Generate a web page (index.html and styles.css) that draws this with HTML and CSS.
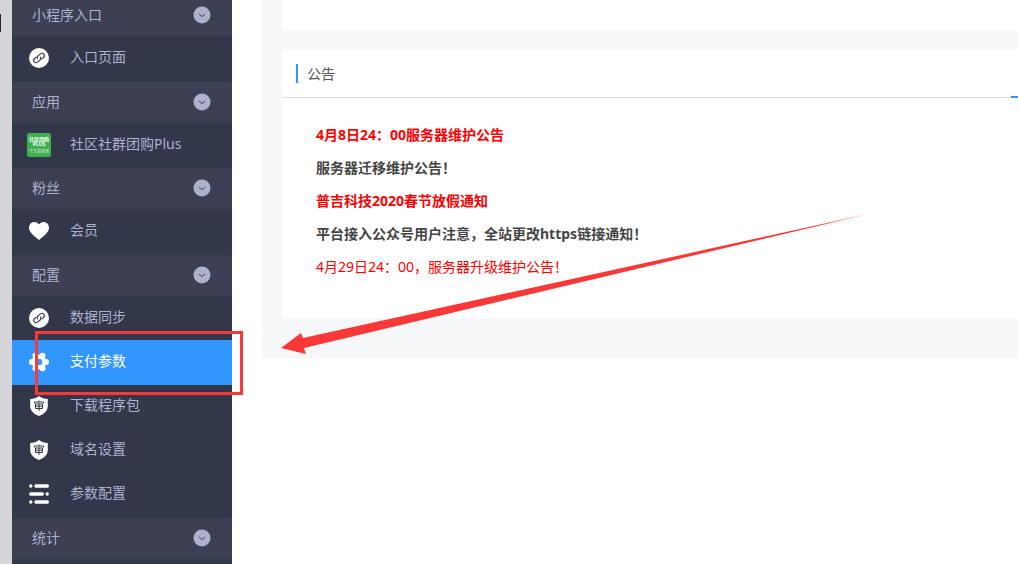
FILE: index.html
```html
<!DOCTYPE html>
<html lang="zh-CN">
<head>
    <meta charset="UTF-8">
    <title>公告</title>
    <link rel="stylesheet" href="styles.css">
</head>
<body>
    <!-- 公用图标 -->
    <svg class="sprite" aria-hidden="true">
        <symbol id="icon-down" viewBox="0 0 18 18">
            <circle cx="9" cy="9" r="8.5" fill="#acb1cd"/>
            <path d="M6 8l3 2.6L12 8" fill="none" stroke="#3c4052" stroke-width="1"/>
        </symbol>
        <symbol id="icon-link" viewBox="0 0 20 20">
            <circle cx="10" cy="10" r="10" fill="#fff"/>
            <g fill="none" stroke="#32374a" stroke-width="1.1" stroke-linecap="round">
                <path d="M8.600 10.900c-.8-1.100-.5-2.200.3-2.900l2.200-1.900c1.200-1 2.800-1 3.700 0 .9 1.100.7 2.400-.4 3.400l-1.500 1.300"/>
                <path d="M11.400 9.100c.8 1.100.5 2.200-.3 2.900l-2.200 1.900c-1.200 1-2.800 1-3.700 0-.9-1.100-.7-2.400.4-3.400l1.500-1.300"/>
            </g>
        </symbol>
        <symbol id="icon-heart" viewBox="0 0 20 20">
            <path d="M10 19C7.500 16.600 0 12 0 6.700 0 3.400 2.400 1 5.300 1 7.300 1 9 2 10 3.400 11 2 12.700 1 14.700 1 17.600 1 20 3.400 20 6.700 20 12 12.500 16.600 10 19z" fill="#fff"/>
        </symbol>
        <symbol id="icon-gear" viewBox="0 0 20 20">
            <g fill="#fff">
                <circle cx="10" cy="10" r="7.300"/>
                <circle cx="3" cy="10" r="3"/>
                <circle cx="17" cy="10" r="3"/>
                <circle cx="6.500" cy="3.800" r="3"/>
                <circle cx="13.500" cy="3.800" r="3"/>
                <circle cx="6.500" cy="16.200" r="3"/>
                <circle cx="13.500" cy="16.200" r="3"/>
            </g>
            <circle cx="10" cy="10" r="3.200" fill="#3296ff"/>
        </symbol>
        <symbol id="icon-shield" viewBox="0 0 20 20">
            <path d="M10 0c2.500 2 5.500 2.800 8.800 3v7c0 5-4.300 8.300-8.800 10-4.500-1.700-8.800-5-8.800-10V3C4.500 2.800 7.500 2 10 0z" fill="#fff"/>
            <path d="M10 4.500V6M5.500 7.500V6h9v1.500M6.500 8h7v4.500h-7zM6.500 10.200h7M10 7.500V15" fill="none" stroke="#32374a" stroke-width="1"/>
        </symbol>
        <symbol id="icon-list" viewBox="0 0 20 20">
            <g stroke="#fff" stroke-width="3.400" stroke-linecap="round">
                <path d="M1.800 2h0M7 2H18.300M1.800 10h11.500M18.200 10h0M1.800 18h0M7 18H18.300"/>
            </g>
        </symbol>
    </svg>

    <div class="layout">
        <div class="rail"><span class="rail-mark"></span></div>

        <nav class="sidebar">
            <button class="group-title" type="button">小程序入口 <svg><use href="#icon-down"/></svg></button>
            <ul class="group">
                <li><a href="#"><span class="icon"><svg><use href="#icon-link"/></svg></span><span class="label">入口页面</span></a></li>
            </ul>

            <button class="group-title" type="button">应用 <svg><use href="#icon-down"/></svg></button>
            <ul class="group">
                <li class="app"><a href="#">
                    <span class="icon">
                        <svg class="app-logo" viewBox="0 0 24 24">
                            <rect width="24" height="24" rx="2.500" fill="#3fb050"/>
                            <g fill="#fff" text-anchor="middle" font-weight="bold">
                                <text x="12" y="8" font-size="5">社区团购</text>
                                <text x="12" y="13" font-size="5">PLUS</text>
                                <text x="12" y="20" font-size="4" opacity=".5">千万店铺用</text>
                            </g>
                        </svg>
                    </span>
                    <span class="label">社区社群团购Plus</span></a></li>
            </ul>

            <button class="group-title" type="button">粉丝 <svg><use href="#icon-down"/></svg></button>
            <ul class="group">
                <li><a href="#"><span class="icon"><svg><use href="#icon-heart"/></svg></span><span class="label">会员</span></a></li>
            </ul>

            <button class="group-title" type="button">配置 <svg><use href="#icon-down"/></svg></button>
            <ul class="group">
                <li><a href="#"><span class="icon"><svg><use href="#icon-link"/></svg></span><span class="label">数据同步</span></a></li>
                <li><a href="#" class="active"><span class="icon"><svg><use href="#icon-gear"/></svg></span><span class="label">支付参数</span></a></li>
                <li><a href="#"><span class="icon"><svg><use href="#icon-shield"/></svg></span><span class="label">下载程序包</span></a></li>
                <li><a href="#"><span class="icon"><svg><use href="#icon-shield"/></svg></span><span class="label">域名设置</span></a></li>
                <li><a href="#"><span class="icon"><svg><use href="#icon-list"/></svg></span><span class="label">参数配置</span></a></li>
            </ul>

            <button class="group-title" type="button">统计 <svg><use href="#icon-down"/></svg></button>
        </nav>

        <main class="content">
            <section class="card card-top"></section>

            <section class="card">
                <header class="card-header">
                    <h2>公告</h2>
                </header>
                <ul class="notices">
                    <li><a href="#" class="red bold">4月8日24：00服务器维护公告</a></li>
                    <li><a href="#" class="bold">服务器迁移维护公告！</a></li>
                    <li><a href="#" class="red bold">普吉科技2020春节放假通知</a></li>
                    <li><a href="#" class="bold">平台接入公众号用户注意，全站更改https链接通知！</a></li>
                    <li><a href="#" class="red">4月29日24：00，服务器升级维护公告！</a></li>
                </ul>
            </section>
        </main>
    </div>

    <!-- 操作指引 -->
    <div class="mark-box"></div>
    <svg class="mark-arrow" viewBox="0 0 588 142">
        <path d="M0 136L20 121L22 126L587 2L23 136L25 142z" fill="#fb3838"/>
    </svg>
</body>
</html>
```

FILE: styles.css
```css
body {
    font-family: "Noto Sans", "Noto Sans CJK SC", sans-serif;
    font-size: 14px;
    line-height: 20px;
    color: #444;
    background-color: #fff;
    margin: 0;
    overflow: hidden;
}

ul {
    list-style: none;
    margin: 0;
    padding: 0;
}

a {
    color: inherit;
    text-decoration: none;
}

.sprite {
    position: absolute;
    width: 0;
    height: 0;
}

.layout {
    display: flex;
    align-items: flex-start;
    height: 100vh;
    overflow: hidden;
}

/* 左侧窄条 */
.rail {
    flex: none;
    width: 12px;
    height: 100%;
    background-color: #d5d4d9;
}

.rail-mark {
    display: block;
    width: 1px;
    height: 18px;
    margin-top: 14px;
    background-color: #222;
}

/* 菜单 */
.sidebar {
    flex: none;
    width: 220px;
    height: 100%;
    background-color: #32374a;
    color: #acb1cd;
    overflow: hidden;
}

.group-title {
    display: flex;
    justify-content: space-between;
    align-items: center;
    width: 100%;
    height: 41px;
    padding: 0 21px 2px 20px;
    border: none;
    border-radius: 3px 3px 0 0;
    background-color: #3c4052;
    color: inherit;
    font: inherit;
    cursor: pointer;
}

.group-title:first-child {
    margin-top: -5px;
}

.group-title svg {
    width: 18px;
    height: 18px;
}

.group {
    padding-bottom: 2px;
}

.group a {
    display: flex;
    align-items: center;
    gap: 19px;
    height: 44px;
    padding: 0 15px;
}

.group .app a {
    height: 43px;
}

.group a.active {
    background-color: #3296ff;
    box-shadow: 0 1px 0 #3296ff;
    color: #fff;
}

.label {
    padding-bottom: 2px;
}

.icon {
    display: flex;
    justify-content: center;
    width: 24px;
}

.icon svg {
    width: 20px;
    height: 20px;
}

.icon .app-logo {
    width: 24px;
    height: 24px;
}

/* 内容区 */
.content {
    flex: 1;
    min-width: 0;
    margin-left: 30px;
    padding: 0 0 40px 20px;
    background-color: #f6f7f9;
}

.card {
    background-color: #fff;
}

.card-top {
    height: 30px;
    margin-bottom: 20px;
}

.card-header {
    position: relative;
    padding: 14px;
    border-bottom: 1px solid #dcdcdc;
}

.card-header::after {
    content: "";
    position: absolute;
    right: 0;
    bottom: -1px;
    width: 7px;
    height: 2px;
    background-color: #3296ff;
}

.card-header h2 {
    margin: 0;
    padding-left: 9px;
    border-left: 2px solid #3296ff;
    font-size: 14px;
    font-weight: normal;
    line-height: 19px;
    color: #555;
}

.notices {
    padding: 20px 34px 35px;
}

.notices li {
    line-height: 33px;
}

.bold {
    font-weight: bold;
}

.red {
    color: #f00;
}

.mark-box {
    position: absolute;
    left: 35px;
    top: 331px;
    width: 202px;
    height: 58px;
    border: 3px solid #fb3838;
}

.mark-arrow {
    position: absolute;
    left: 281px;
    top: 212px;
    width: 588px;
    height: 142px;
}
```
